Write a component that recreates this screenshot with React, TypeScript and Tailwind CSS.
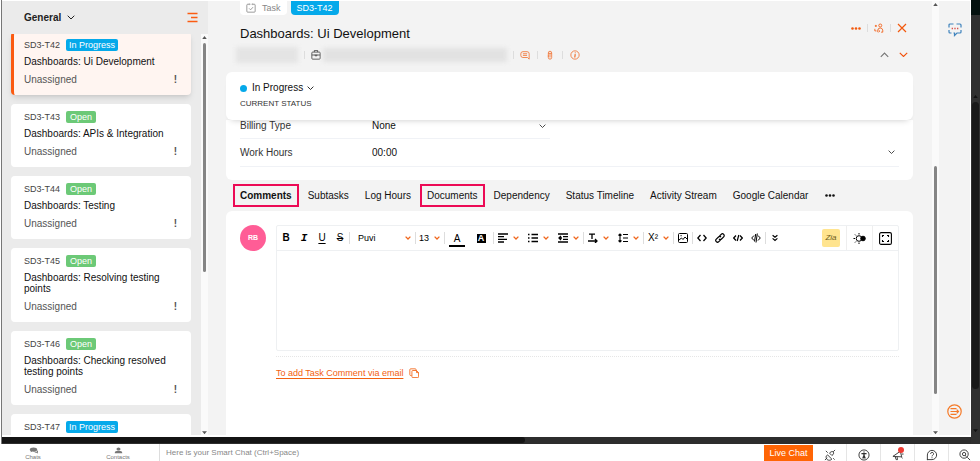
import type { ReactNode } from "react";
import clsx from "clsx";

type Status = "In Progress" | "Open";

interface Task {
  id: string;
  status: Status;
  title?: string;
  active?: boolean;
}

const TASKS: Task[] = [
  { id: "SD3-T42", status: "In Progress", title: "Dashboards: Ui Development", active: true },
  { id: "SD3-T43", status: "Open", title: "Dashboards: APIs & Integration" },
  { id: "SD3-T44", status: "Open", title: "Dashboards: Testing" },
  { id: "SD3-T45", status: "Open", title: "Dashboards: Resolving testing points" },
  { id: "SD3-T46", status: "Open", title: "Dashboards: Checking resolved testing points" },
  { id: "SD3-T47", status: "In Progress" },
];

const TABS = [
  { label: "Comments", boxed: true },
  { label: "Subtasks" },
  { label: "Log Hours" },
  { label: "Documents", boxed: true },
  { label: "Dependency" },
  { label: "Status Timeline" },
  { label: "Activity Stream" },
  { label: "Google Calendar" },
];

export default function App() {
  return (
    <div className="flex h-screen flex-col overflow-hidden bg-white font-['Liberation_Sans',Arial,sans-serif] text-[10px] leading-3 text-[#111]">
      <div className="ml-px flex min-h-0 flex-1 border-l border-[#777]">
        <div className="flex min-w-0 flex-1 flex-col">
          <div className="flex min-h-0 flex-1 border-t border-white">
            <Sidebar />
            <TaskDetail />
            <Rail />
          </div>
          <div className="mt-0.5 flex h-[7px] shrink-0 bg-[#2d2d2d]">
            <div className="h-1.5 w-[54%] rounded-r bg-[#141414]" />
          </div>
        </div>
        <OuterScrollbar />
      </div>
      <Footer />
    </div>
  );
}

function Sidebar() {
  return (
    <aside className="flex w-[206px] shrink-0 flex-col bg-[#ebebeb]">
      <div className="z-10 flex h-[33px] shrink-0 items-center justify-between bg-[#ebebeb] pr-2.5 pl-[22px]">
        <button className="flex items-center gap-1.5 text-[10px] font-bold text-[#222]">
          General
          <Chevron className="w-2" />
        </button>
        <button aria-label="Task list options" className="text-[#fb5c12]">
          <Icon size={11} box={11}>
            <path d="M.500 1.500h10M4 5.500h6.500M.500 9.500h10" />
          </Icon>
        </button>
      </div>
      <div className="flex min-h-0 flex-1">
        <ul className="-mt-0.5 flex min-w-0 flex-1 flex-col gap-[9px] overflow-hidden pr-2.5 pl-[9px]">
          {TASKS.map((task) => (
            <TaskCard key={task.id} task={task} />
          ))}
        </ul>
        <Scrollbar thumb="mt-1 h-[57%]" />
      </div>
    </aside>
  );
}

function TaskCard({ task }: { task: Task }) {
  return (
    <li
      className={clsx(
        "shrink-0 rounded border-l-3 pt-[7px] pr-3.5 pb-[9px] pl-2.5",
        task.active
          ? "border-[#fb5a10] bg-[#fff5f1] shadow-md"
          : "border-white bg-white",
      )}
    >
      <div className="flex items-center gap-1.5">
        <span className="text-[9px] text-[#444]">{task.id}</span>
        <span
          className={clsx(
            "rounded-xs text-[9px] leading-3 text-white",
            task.status === "Open" ? "bg-[#6cc977] px-1" : "bg-[#05a9ea] px-[3px]",
          )}
        >
          {task.status}
        </span>
      </div>
      {task.title && (
        <>
          <p className="mt-[5px] leading-[11px]">{task.title}</p>
          <div className="mt-[7px] flex items-center justify-between text-[#555]">
            <span>Unassigned</span>
            <span className="font-bold">!</span>
          </div>
        </>
      )}
    </li>
  );
}

function TaskDetail() {
  return (
    <main className="flex min-w-0 flex-1 bg-[#f3f3f3]">
      <div className="flex min-w-0 flex-1 flex-col pr-[19px] pl-[18px]">
        <div className="flex h-[14px] shrink-0 items-stretch gap-1 pl-3.5 text-[9px]">
          <span className="flex items-center gap-1.5 rounded-b bg-white px-1.5 text-[#888]">
            <Icon size={10} box={12} width={1}>
              <path d="M3.5 1.5H2a1 1 0 0 0-1 1V10a1 1 0 0 0 1 1h8a1 1 0 0 0 1-1V2.500a1 1 0 0 0-1-1H8.500M4 .5v2M8 .5v2M5.500 1.500h1M3.800 6.500l1.700 1.700 2.900-3.200" />
            </Icon>
            Task
          </span>
          <span className="flex items-center rounded-b bg-[#05a9ea] px-1.5 text-white">
            SD3-T42
          </span>
        </div>
        <TaskHeading />
        <section className="z-10 shrink-0 rounded-md bg-white px-3.5 pt-2.5 pb-[11px] shadow-[0_5px_6px_-5px_rgba(0,0,0,0.22)]">
          <button className="flex items-center">
            <span className="mr-[5px] size-[7px] rounded-full bg-[#05a9ea]" />
            In Progress
            <Chevron className="ml-1 w-[7px]" />
          </button>
          <p className="mt-1 text-[8px] leading-[11px] text-[#333]">CURRENT STATUS</p>
        </section>
        <Fields />
        <Tabs />
        <CommentPanel />
      </div>
      <Scrollbar thumb="mt-[160px] h-[228px]" />
    </main>
  );
}

function TaskHeading() {
  return (
    <header className="shrink-0 pb-[11px] pl-3.5">
      <div className="flex h-[33px] items-center justify-between pt-1 pr-1.5">
        <h1 className="text-[13px] leading-4">Dashboards: Ui Development</h1>
        <div className="flex items-center self-start pt-1 text-[#f2590d]">
          <button aria-label="More actions">
            <Dots />
          </button>
          <Separator className="mx-1.5" />
          <button aria-label="Assign people">
            <Icon size={10} box={12} width={1}>
              <circle cx="7.500" cy="3" r="1.800" />
              <path d="M4.500 11V8.500a3 3 0 0 1 3-2.500 3 3 0 0 1 3 2.500V11h-2M1 3.500h2.500M2.200 2.300v2.500M1 7v2.500h2M5.500 8.500l1.500 1.300-1.500 1.200" />
            </Icon>
          </button>
          <Separator className="mx-1.5" />
          <button aria-label="Close">
            <Icon size={10} box={10} width={1.2}>
              <path d="m1 1 8 8M9 1 1 9" />
            </Icon>
          </button>
        </div>
      </div>
      <div className="flex h-[13px] items-center pr-[5px] text-[#f07232]">
        <span className="-ml-1 h-4 w-[62px] bg-[#e4e4e4] blur-[2px]" />
        <Separator className="mx-1.5" />
        <span className="text-[#444]">
          <Icon size={10} box={12} width={1}>
            <path d="M2 2.500h8a1 1 0 0 1 1 1V10a1 1 0 0 1-1 1H2a1 1 0 0 1-1-1V3.500a1 1 0 0 1 1-1ZM4 2.500v-2h4v2M1 6h10M5 5.500v1.500h2V5.500" />
          </Icon>
        </span>
        <span className="ml-0.5 h-3.5 w-[184px] bg-[#e2e2e2] blur-[2px]" />
        <Separator className="mx-1.5" />
        <button aria-label="Comments">
          <Icon size={10} box={12} width={1}>
            <path d="M3.500 2h5A2.500 2.500 0 0 1 11 4.500V11L9 9H3.500A2.500 2.500 0 0 1 1 6.500v-2A2.500 2.500 0 0 1 3.500 2ZM3.500 4.500h5M3.500 6.500h5" />
          </Icon>
        </button>
        <Separator className="mx-[7px]" />
        <button aria-label="Attachments">
          <Icon size={10} box={12} width={1}>
            <path d="M4 8V3.500a2 2 0 0 1 4 0V9a2 2 0 0 1-4 0V6.500M6 4v5M4 4h4" />
          </Icon>
        </button>
        <Separator className="mx-[7px]" />
        <button aria-label="Task information">
          <Icon size={10} box={12} width={1}>
            <circle cx="6" cy="6" r="5" />
            <path strokeWidth="1.500" d="M6.400 3v.800M6.300 5l-.600 4" />
          </Icon>
        </button>
        <button aria-label="Previous task" className="ml-auto text-[#777]">
          <Chevron className="w-[9px] rotate-180" />
        </button>
        <button aria-label="Next task" className="ml-2.5 text-[#f2500a]">
          <Chevron className="w-[9px]" />
        </button>
      </div>
    </header>
  );
}

function Fields() {
  return (
    <section className="shrink-0 rounded-b-md bg-white px-3.5 pb-[13px] text-[#333]">
      <div className="flex h-[19px] w-[310px] items-start border-b border-[#f0f2f6]">
        <label htmlFor="billing" className="w-33 shrink-0">
          Billing Type
        </label>
        <select id="billing" className="h-3 flex-1 appearance-none text-[#111]">
          <option>None</option>
        </select>
        <span className="flex h-3 items-center">
          <Chevron className="mr-1 w-[7px]" />
        </span>
      </div>
      <div className="flex h-7 items-center border-b border-[#f0f2f6]">
        <label htmlFor="hours" className="w-33 shrink-0">
          Work Hours
        </label>
        <input id="hours" defaultValue="00:00" className="h-3 min-w-0 flex-1 text-[#111]" />
        <Chevron className="mr-1 w-[7px]" />
      </div>
    </section>
  );
}

function Tabs() {
  return (
    <nav className="flex h-[31px] shrink-0 items-center gap-0.5 pl-[7px]">
      {TABS.map((tab) => (
        <button
          key={tab.label}
          className={clsx(
            "h-[23px] border-2 px-[5px] whitespace-nowrap",
            tab.boxed ? "border-[#ec0a55]" : "border-transparent",
            tab.label === "Comments" && "font-bold",
          )}
        >
          {tab.label}
        </button>
      ))}
      <button aria-label="More tabs" className="ml-2">
        <Dots />
      </button>
    </nav>
  );
}

function CommentPanel() {
  return (
    <section className="flex min-h-0 flex-1 gap-2.5 rounded-t-md bg-white px-3.5 pt-3.5">
      <span className="flex size-[26px] shrink-0 items-center justify-center rounded-full bg-[#ff5d96] text-[7px] font-bold text-white">
        RB
      </span>
      <div className="min-w-0 flex-1">
        <div className="rounded-xs border border-[#eef0f2]">
          <Toolbar />
          <textarea aria-label="Comment" className="block h-[99px] w-full resize-none outline-none" />
        </div>
        <div className="mt-[5px] border-t border-dotted border-[#e6e6e6]" />
        <div className="mt-2.5 flex items-center gap-1.5 text-[#f2600f]">
          <a href="#email" className="text-[9px] underline underline-offset-2">
            To add Task Comment via email
          </a>
          <button aria-label="Copy address">
            <Icon size={10} box={12} width={1}>
              <path d="M8.500 3V2a1 1 0 0 0-1-1H2a1 1 0 0 0-1 1v6a1 1 0 0 0 1 1h1M4.500 3H9l2.500 2.500v5a1 1 0 0 1-1 1h-6a1 1 0 0 1-1-1V4a1 1 0 0 1 1-1ZM9 3v2.500h2.500" />
            </Icon>
          </button>
        </div>
      </div>
    </section>
  );
}

function Toolbar() {
  return (
    <div className="flex h-[25px] items-center border-b border-[#eef0f2] text-black">
      <Tool label="Bold">
        <b>B</b>
      </Tool>
      <Tool label="Italic">
        <i className="font-['Liberation_Mono',monospace] text-[11px] font-bold">I</i>
      </Tool>
      <Tool label="Underline">
        <u className="underline-offset-2">U</u>
      </Tool>
      <Tool label="Strikethrough" divider>
        <s>S</s>
      </Tool>
      <div className="flex h-3 w-[66px] shrink-0 items-center border-r border-[#ddd] pr-1 pl-2 text-[9px]">
        <select aria-label="Font" className="h-3 min-w-0 flex-1 appearance-none">
          <option>Puvi</option>
        </select>
        <OrangeChevron />
      </div>
      <div className="flex h-3 w-[29px] shrink-0 items-center border-r border-[#ddd] pr-1 pl-[3px] text-[9px]">
        <select aria-label="Font size" className="h-3 min-w-0 flex-1 appearance-none">
          <option>13</option>
        </select>
        <OrangeChevron />
      </div>
      <button aria-label="Text colour" className="flex w-6 shrink-0 justify-center">
        <span className="mt-1 w-4 border-b-2 border-black">A</span>
      </button>
      <button aria-label="Highlight" className="flex h-3 w-[25px] shrink-0 items-center justify-center border-r border-[#ddd]">
        <span className="w-[9px] bg-black text-[9px] leading-[9px] font-bold text-white">A</span>
      </button>
      <Menu label="Align">
        <Icon size={10} box={10}>
          <path d="M0 1h10M0 3.700h6M0 6.300h9M0 9h6" />
        </Icon>
      </Menu>
      <Menu label="List">
        <Icon size={10} box={10}>
          <path d="M0 1.500h1.500M0 5h1.500M0 8.500h1.500M3.500 1.500H10M3.500 5H10M3.500 8.500H10" />
        </Icon>
      </Menu>
      <Menu label="Indent" divider>
        <Icon size={10} box={10}>
          <path d="M0 1h10M5 3.700h5M5 6.300h5M0 9h10M3 3 1 5l2 2M1 5h3" />
        </Icon>
      </Menu>
      <Menu label="Text direction">
        <Icon size={10} box={10}>
          <path d="M1 1.200h6M4 1v5M0 8h9M7 6l2 2-2 2" />
        </Icon>
      </Menu>
      <Menu label="Line height" divider>
        <Icon size={10} box={10} width={1.1}>
          <path d="M5 1.500h5M5 5h5M5 8.500h5M2 1v8M.500 2.500 2 1l1.500 1.500M.500 7.500 2 9l1.500-1.500" />
        </Icon>
      </Menu>
      <Menu label="Superscript" divider>
        <span>X²</span>
      </Menu>
      <Tool label="Image" divider>
        <Icon size={10} box={10} width={1}>
          <rect x=".5" y=".5" width="9" height="9" rx="1" />
          <path d="m1 7 2.500-2L5 6.500 7 4l2 2M2.500 2.700h1.200" />
        </Icon>
      </Tool>
      <Tool label="Code">
        <Icon size={10} box={10}>
          <path d="M3.500 2 .800 5l2.700 3M6.500 2l2.700 3-2.700 3" />
        </Icon>
      </Tool>
      <Tool label="Link">
        <Icon size={10} box={10} width={1.2}>
          <path d="m4.500 3 1.700-1.700a1.700 1.700 0 0 1 2.500 2.500L6.500 6A1.700 1.700 0 0 1 4 6M5.500 7 3.800 8.700a1.700 1.700 0 0 1-2.500-2.500L3.500 4A1.700 1.700 0 0 1 6 4" />
        </Icon>
      </Tool>
      <Tool label="HTML">
        <Icon size={10} box={10} width={1.2}>
          <path d="M3 2.500.700 5 3 7.500M7 2.500 9.300 5 7 7.500M5.800 2 4.200 8" />
        </Icon>
      </Tool>
      <Tool label="Snippet" divider>
        <Icon size={10} box={10} width={1}>
          <path d="M3 2.500.700 5 3 7.500M7 2.500 9.300 5 7 7.500M6.300.500 5 9.500M4.700 1 3.500 8.500" />
        </Icon>
      </Tool>
      <Tool label="More tools">
        <Icon size={8} box={10} width={1.5}>
          <path d="m2 1.500 3 2.500 3-2.500M2 5.500 5 8l3-2.500" />
        </Icon>
      </Tool>
      <button className="mr-1.5 ml-auto size-[18px] shrink-0 rounded-xs bg-[#ffe48f] text-[8px] text-[#6b5b20] italic">
        Zia
      </button>
      <button aria-label="Theme" className="flex h-full w-[26px] shrink-0 items-center justify-center border-l border-[#eee]">
        <Icon size={13} box={13} width={1}>
          <circle cx="6" cy="6.500" r="2.800" />
          <path d="M6 1v1.500M6 10.500V12M.500 6.500H2M2 2.500l1 1M2 10.500l1-1" />
          <circle cx="10" cy="6.500" r="2.300" fill="currentColor" />
        </Icon>
      </button>
      <button aria-label="Full screen" className="flex h-full w-[26px] shrink-0 items-center justify-center border-l border-[#eee]">
        <Icon size={13} box={13} width={1.1}>
          <rect x=".6" y=".6" width="11.800" height="11.800" rx="1.500" />
          <path d="M3.500 5V3.500H5M8 3.500h1.500V5M9.500 8v1.500H8M5 9.500H3.500V8" />
        </Icon>
      </button>
    </div>
  );
}

function Tool({ label, divider, children }: { label: string; divider?: boolean; children: ReactNode }) {
  return (
    <button
      aria-label={label}
      className={clsx(
        "flex h-3 shrink-0 items-center justify-center",
        divider ? "w-[19px] border-r border-[#ddd]" : "w-[18px]",
      )}
    >
      {children}
    </button>
  );
}

function Menu({ label, divider, children }: { label: string; divider?: boolean; children: ReactNode }) {
  return (
    <button
      aria-label={label}
      className={clsx(
        "flex h-3 shrink-0 items-center justify-between border-r px-1",
        divider ? "border-[#ddd]" : "border-transparent",
        "w-[30px]",
      )}
    >
      {children}
      <OrangeChevron />
    </button>
  );
}

function Rail() {
  return (
    <aside className="flex w-8 shrink-0 flex-col items-center justify-between border-r border-white bg-[#f3f3f3] pt-[22px] pb-4">
      <button aria-label="Feedback" className="text-[#3f83bd]">
        <Icon size={14} box={14} width={1.2}>
          <path d="M5.500 1H2a1 1 0 0 0-1 1v2.500M1 7v2a1 1 0 0 0 1 1h1.500M8.500 1H12a1 1 0 0 1 1 1v2.500M13 7v2a1 1 0 0 1-1 1H9l-2.500 2.500V10H5.500" />
          <path stroke="#d6403a" strokeWidth="1.500" d="M3.700 5.500h1.200M6.400 5.500h1.200M9.100 5.500h1.200" />
        </Icon>
      </button>
      <button aria-label="Open panel" className="text-[#f57a28]">
        <Icon size={15} box={15} width={1.2}>
          <circle cx="7.500" cy="7.500" r="6.700" />
          <path d="M3.500 4.700h6M3.500 7.500h8M3.500 10.300h6M9.700 5.700l1.800 1.800-1.800 1.800" />
        </Icon>
      </button>
    </aside>
  );
}

function Scrollbar({ thumb }: { thumb: string }) {
  return (
    <div className="flex w-[7px] shrink-0 flex-col items-center bg-[#fafafa] text-[#555]">
      <Triangle className="mt-0.5 shrink-0" />
      <div className={clsx("w-[3px] rounded bg-[#858585]", thumb)} />
      <Triangle className="mt-auto mb-px shrink-0 rotate-180" />
    </div>
  );
}

/** Dark scrollbar of the surrounding window. */
function OuterScrollbar() {
  return (
    <div className="flex w-[9px] shrink-0 flex-col items-center bg-[#303030] text-[#111]">
      <div className="h-[15px] w-full bg-[#04110f]" />
      <Triangle className="mt-20 shrink-0" />
      <div className="mt-1 w-[7px] flex-1 rounded bg-[#191919]" />
      <Triangle className="mt-10 mb-3 shrink-0 rotate-180" />
    </div>
  );
}

function Footer() {
  return (
    <footer className="flex h-[17px] shrink-0 items-stretch overflow-hidden bg-white pl-px text-[#333]">
      <FooterLink label="Chats">
        <path d="M6 1C3.200 1 1 2.500 1 4.500c0 1 .600 2 1.500 2.600L2 9l2.500-1.200L6 8c2.800 0 5-1.500 5-3.500S8.800 1 6 1Z" />
        <path d="M11.500 5c.600 2.500-2 4-4.500 4.200 1 .800 2.200.800 3 .600L12 11l-.300-2c1-1 1-3-.200-4Z" />
      </FooterLink>
      <FooterLink label="Contacts">
        <circle cx="6" cy="3.500" r="2.700" />
        <path d="M1 10.500C1 8 2.500 6.500 6 6.500s5 1.500 5 4Z" />
      </FooterLink>
      <div className="flex min-w-0 flex-1 border-l border-[#ddd]">
        <input
          aria-label="Smart Chat"
          placeholder="Here is your Smart Chat (Ctrl+Space)"
          className="w-full min-w-0 px-1.5 text-[8px] outline-none placeholder:text-[#888]"
        />
      </div>
      <button className="mt-px w-[49px] shrink-0 bg-[#ff6505] text-[9px] text-white">
        Live Chat
      </button>
      <FooterTool label="Integrations">
        <path d="m1 12 2.500-2.500M4 6.500 8.500 11 7 12c-1.500.500-3 0-3.800-.800S2 8.500 2.500 7.500ZM6 4.500 8.500 7M6 4.500C7 3 8.500 2.500 10 3c.800 1.500.500 3-1.500 4M10 3l2-2M2 2l2 2M10 10l1.500 1.500" />
      </FooterTool>
      <FooterTool label="Accessibility">
        <circle cx="6.500" cy="6.500" r="5.500" />
        <path strokeWidth="1.500" d="M6.500 2.800v1M3.700 5h5.600M6.500 5v2.500M6.500 7l-1.300 3.200M6.500 7l1.300 3.200" />
      </FooterTool>
      <FooterTool label="Announcements" badge>
        <path d="m1 8 8-5.500 1.500 6L1 8ZM3.500 8.500l1 3h1.500l-.500-3M10.500 5.500h2M10 8.500l1.500 1.500" />
      </FooterTool>
      <FooterTool label="Help">
        <path d="M1.500 12V6.500a5 5 0 1 1 5 5H1.500ZM5 5.300a1.600 1.600 0 1 1 2.300 1.400c-.600.300-.800.600-.800 1.300M6.500 9v1" />
      </FooterTool>
      <FooterTool label="Search" last>
        <circle cx="5.500" cy="5.500" r="4.500" />
        <circle cx="5.500" cy="5.500" r="1.800" />
        <path d="m9 9 3 3M6.500 7l1.500 1" />
      </FooterTool>
    </footer>
  );
}

function FooterLink({ label, children }: { label: string; children: ReactNode }) {
  return (
    <button className="flex shrink-0 flex-col items-center pt-[3px] text-[6px] leading-[7px] text-[#777] first:w-[64px] nth-2:w-[94px] nth-2:pl-3">
      <svg viewBox="0 0 12 12" className="h-[7px] w-[9px] shrink-0" preserveAspectRatio="none" fill="currentColor">
        {children}
      </svg>
      {label}
    </button>
  );
}

function FooterTool({
  label,
  badge,
  last,
  children,
}: {
  label: string;
  badge?: boolean;
  last?: boolean;
  children: ReactNode;
}) {
  return (
    <button
      aria-label={label}
      className={clsx(
        "relative flex shrink-0 items-center justify-center pt-1",
        last ? "w-[31px]" : "w-[34px] border-r border-[#e5e5e5]",
      )}
    >
      <Icon size={12} box={13} width={1}>
        {children}
      </Icon>
      {badge && <span className="absolute top-[3px] right-2.5 size-[6px] rounded-full bg-[#ee3b33]" />}
    </button>
  );
}

function Icon({
  size,
  box,
  width = 1.3,
  children,
}: {
  size: number;
  box: number;
  width?: number;
  children: ReactNode;
}) {
  return (
    <svg
      width={size}
      height={size}
      viewBox={`0 0 ${box} ${box}`}
      fill="none"
      stroke="currentColor"
      strokeWidth={width}
      className="shrink-0"
      aria-hidden="true"
    >
      {children}
    </svg>
  );
}

function Chevron({ className }: { className?: string }) {
  return (
    <svg viewBox="0 0 8 5" className={clsx("shrink-0 self-center", className)} fill="none" stroke="currentColor" aria-hidden="true">
      <path d="m.700.700 3.300 3.300L7.300.700" />
    </svg>
  );
}

function OrangeChevron() {
  return (
    <svg viewBox="0 0 6 4" className="w-1.5 shrink-0" fill="none" stroke="#f0661c" strokeWidth="1.300" aria-hidden="true">
      <path d="m.600.600 2.400 2.400L5.400.600" />
    </svg>
  );
}

function Triangle({ className }: { className?: string }) {
  return (
    <svg viewBox="0 0 6 4" className={clsx("w-[5px]", className)} fill="currentColor" aria-hidden="true">
      <path d="M3 0 6 4H0Z" />
    </svg>
  );
}

function Dots() {
  return (
    <svg viewBox="0 0 10 3" className="w-2.5" fill="currentColor" aria-hidden="true">
      <circle cx="1.500" cy="1.500" r="1.300" />
      <circle cx="5" cy="1.500" r="1.300" />
      <circle cx="8.500" cy="1.500" r="1.300" />
    </svg>
  );
}

function Separator({ className }: { className?: string }) {
  return <span className={clsx("h-2 w-px shrink-0 bg-[#ddd]", className)} />;
}
